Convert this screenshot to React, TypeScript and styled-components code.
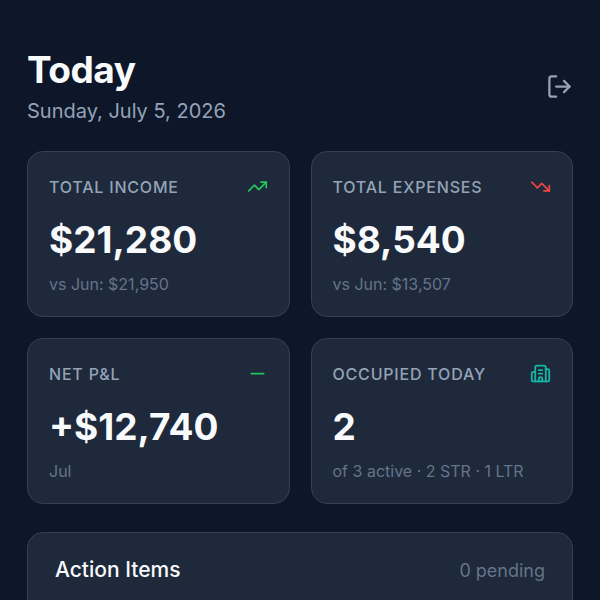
import React from 'react'
import styled, { createGlobalStyle } from 'styled-components'
import { Building2, LogOut, Minus, TrendingDown, TrendingUp } from 'lucide-react'

const GlobalStyle = createGlobalStyle`
  html, body {
    margin: 0;
    height: 600px;
    overflow: hidden;
    background: #0f172a;
  }
`

const Page = styled.main`
  box-sizing: border-box;
  width: 600px;
  height: 600px;
  padding: 48px 27px 0;
  background: #0e172a;
  font-family: Inter, "Liberation Sans", sans-serif;
  overflow: hidden;
`

const Header = styled.header`
  display: flex;
  justify-content: space-between;
  align-items: center;
  margin-bottom: 26px;
`

const Title = styled.h1`
  margin: 0;
  font-family: Inter, sans-serif;
  font-size: 37px;
  line-height: 44px;
  font-weight: 700;
  letter-spacing: -0.5px;
  color: #f8fafc;
`

const DateLine = styled.p`
  margin: 5px 0 0;
  font-size: 20px;
  line-height: 28px;
  color: #94a3b8;
`

const LogoutButton = styled.button`
  display: flex;
  padding: 0;
  margin-right: 0;
  border: 0;
  background: none;
  color: #94a3b8;
`

const Grid = styled.section`
  display: grid;
  grid-template-columns: 1fr 1fr;
  gap: 21px;
`

const Card = styled.article`
  box-sizing: border-box;
  height: 166px;
  padding: 21px;
  background: #1e293b;
  border: 1.3px solid #334155;
  border-radius: 16px;
`

const CardTop = styled.div`
  display: flex;
  justify-content: space-between;
  align-items: center;
  height: 27px;
`

const Label = styled.span`
  font-size: 16px;
  font-weight: 500;
  letter-spacing: 0.8px;
  color: #94a3b8;
`

const Value = styled.div`
  margin-top: 13px;
  font-family: Inter, sans-serif;
  font-size: 37px;
  line-height: 53px;
  font-weight: 700;
  color: #f8fafc;
`

const Sub = styled.div`
  margin-top: 6px;
  font-size: 16px;
  line-height: 24px;
  color: #64748b;
`

const ActionCard = styled.section`
  box-sizing: border-box;
  margin-top: 28px;
  height: 120px;
  padding: 21px 27px;
  background: #1e293b;
  border: 1.3px solid #334155;
  border-radius: 16px;
`

const ActionHeader = styled.div`
  display: flex;
  justify-content: space-between;
  align-items: center;
`

const ActionTitle = styled.h2`
  margin: 0;
  font-size: 21px;
  line-height: 32px;
  font-weight: 500;
  color: #f8fafc;
`

const Pending = styled.span`
  font-size: 18px;
  color: #64748b;
`

const stats = [
  { label: 'TOTAL INCOME', value: '$21,280', sub: 'vs Jun: $21,950', icon: <TrendingUp size={21} color="#22c55e" /> },
  { label: 'TOTAL EXPENSES', value: '$8,540', sub: 'vs Jun: $13,507', icon: <TrendingDown size={21} color="#ef4444" /> },
  { label: 'NET P&L', value: '+$12,740', sub: 'Jul', icon: <Minus size={21} color="#22c55e" /> },
  { label: 'OCCUPIED TODAY', value: '2', sub: 'of 3 active · 2 STR · 1 LTR', icon: <Building2 size={21} color="#14b8a6" /> },
]

const App: React.FC = () => {
  return (
    <Page>
      <GlobalStyle />
      <Header>
        <div>
          <Title>Today</Title>
          <DateLine>Sunday, July 5, 2026</DateLine>
        </div>
        <LogoutButton aria-label="Sign out">
          <LogOut size={27} strokeWidth={2} />
        </LogoutButton>
      </Header>
      <Grid>
        {stats.map(stat => (
          <Card key={stat.label}>
            <CardTop>
              <Label>{stat.label}</Label>
              {stat.icon}
            </CardTop>
            <Value>{stat.value}</Value>
            <Sub>{stat.sub}</Sub>
          </Card>
        ))}
      </Grid>
      <ActionCard>
        <ActionHeader>
          <ActionTitle>Action Items</ActionTitle>
          <Pending>0 pending</Pending>
        </ActionHeader>
      </ActionCard>
    </Page>
  )
}

export default App
